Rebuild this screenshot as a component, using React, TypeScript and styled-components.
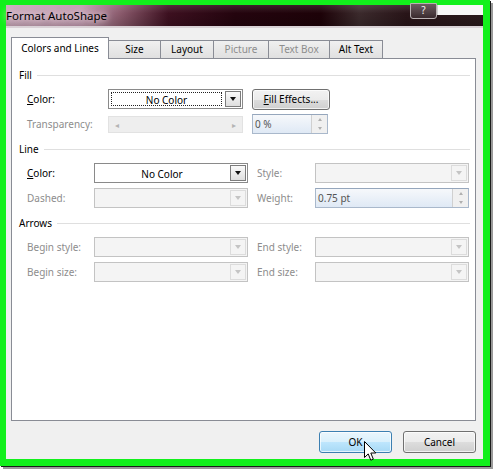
import React from "react";
import styled, { createGlobalStyle, css } from "styled-components";

const GlobalStyle = createGlobalStyle`
  html, body { margin: 0; padding: 0; background: #ffffff; }
  body { font-family: "Noto Sans", "Open Sans", sans-serif; font-size: 10px; color: #000; }
  * { box-sizing: border-box; }
`;

const Screen = styled.div`
  position: relative;
  width: 494px;
  height: 470px;
  background: #ffffff;
  overflow: hidden;
`;

const Frame = styled.div`
  width: 490px;
  height: 466px;
  border-style: solid;
  border-color: #12f01c;
  border-width: 5px 7px 7px 6px;
  box-shadow: 1px 1px 0 #1b1b1b, 3px 3px 0 #9a9a9a;
  display: flex;
  flex-direction: column;
  background: #f0f0f0;
`;

const TitleBar = styled.div`
  position: relative;
  height: 23px;
  flex: none;
  display: flex;
  align-items: center;
  background:
    linear-gradient(to bottom, rgba(255,255,255,0.12), rgba(0,0,0,0) 40%, rgba(0,0,0,0.15)),
    linear-gradient(to right, #c7a6b6 0%, #bd97aa 16%, #8a5a6c 24%, #3d1020 34%, #24040e 48%, #1d0208 66%, #3b2a2c 74%, #281418 84%, #2a1a1c 100%);
  border-bottom: 2px solid #d9d2d6;
`;

const TitleText = styled.span`
  font-size: 11.5px;
  color: #000;
  text-shadow: 0 0 6px rgba(255, 235, 245, 0.9), 0 0 10px rgba(255, 235, 245, 0.7);
`;

const HelpButton = styled.div`
  position: absolute;
  left: 404px;
  top: -2px;
  width: 27px;
  height: 16px;
  border: 1px solid #b9b0b2;
  border-radius: 0 0 3px 3px;
  background: linear-gradient(#6e5e62, #3a2a2e);
  color: #f4f4f4;
  font-size: 10px;
  line-height: 12px;
  text-align: center;
`;

const ClosePatch = styled.div`
  position: absolute;
  left: 431px;
  top: 0;
  width: 46px;
  height: 10px;
  background: #f7f7f7;
  border-left: 1px solid #cfcfcf;
`;

const Body = styled.div`
  flex: 1;
  display: flex;
  flex-direction: column;
  padding: 9px 7px 6px 5px;
  background: #f0f0f0;
`;

const TabStrip = styled.div`
  position: relative;
  z-index: 1;
  display: flex;
  align-items: flex-end;
  height: 22px;
  margin-bottom: -1px;
`;

const Tab = styled.div<{ $active?: boolean; $disabled?: boolean; $width: number }>`
  width: ${(p) => p.$width}px;
  text-align: center;
  border: 1px solid #898c95;
  border-bottom: none;
  margin-right: -1px;
  white-space: nowrap;
  color: ${(p) => (p.$disabled ? "#8d8d8d" : "#000")};
  ${(p) =>
    p.$active
      ? css`
          height: 22px;
          line-height: 20px;
          background: #ffffff;
          position: relative;
          z-index: 2;
        `
      : css`
          height: 18px;
          line-height: 17px;
          margin-bottom: 1px;
          background: linear-gradient(#f0f0f0, #e0e0e0);
        `}
`;

const Panel = styled.div`
  flex: 1;
  background: #ffffff;
  border: 1px solid #898c95;
  padding: 9px 5px 0 7px;
  display: flex;
  flex-direction: column;
  gap: 8px;
`;

const Section = styled.div`
  display: flex;
  flex-direction: column;
  gap: 7px;
`;

const SectionHeader = styled.div`
  display: flex;
  align-items: center;
  gap: 5px;
  height: 14px;
  line-height: 14px;
  &::after {
    content: "";
    flex: 1;
    height: 1px;
    background: #dfdfdf;
    margin-top: 1px;
  }
`;

const FieldGrid = styled.div<{ $cols: string }>`
  display: grid;
  grid-template-columns: ${(p) => p.$cols};
  grid-auto-rows: 20px;
  column-gap: 9px;
  row-gap: 5px;
  padding-left: 8px;
  align-items: center;
`;

const Label = styled.span<{ $disabled?: boolean }>`
  white-space: nowrap;
  color: ${(p) => (p.$disabled ? "#8d8d8d" : "#000")};
  u { text-decoration: underline; }
`;

const ComboBox = styled.div<{ $disabled?: boolean }>`
  height: 20px;
  display: flex;
  border: 1px solid ${(p) => (p.$disabled ? "#c3c3c3" : "#8a8a8a")};
  background: ${(p) => (p.$disabled ? "#f4f4f4" : "#ffffff")};
`;

const ComboText = styled.div<{ $focus?: boolean }>`
  flex: 1;
  margin: 2px;
  text-align: center;
  line-height: 14px;
  border: 1px dotted ${(p) => (p.$focus ? "#222" : "transparent")};
`;

const DropButton = styled.div<{ $disabled?: boolean }>`
  width: 16px;
  margin: 1px;
  display: flex;
  align-items: center;
  justify-content: center;
  border: 1px solid ${(p) => (p.$disabled ? "#dcdcdc" : "#7c7c7c")};
  background: ${(p) =>
    p.$disabled ? "#f4f4f4" : "linear-gradient(#fafafa, #dedede)"};
  &::before {
    content: "";
    border-left: 3.5px solid transparent;
    border-right: 3.5px solid transparent;
    border-top: 4px solid ${(p) => (p.$disabled ? "#c4c4c4" : "#111")};
  }
`;

const PushButton = styled.div<{ $hover?: boolean; $width: number; $tall?: boolean }>`
  width: ${(p) => p.$width}px;
  height: ${(p) => (p.$tall ? 22 : 21)}px;
  border-radius: 3px;
  display: flex;
  align-items: center;
  justify-content: center;
  border: 1px solid ${(p) => (p.$hover ? "#3c7fb1" : "#707070")};
  background: ${(p) =>
    p.$hover
      ? "linear-gradient(#eaf6fd 0%, #d9f0fc 50%, #bee6fd 51%, #a7d9f5 100%)"
      : "linear-gradient(#f2f2f2 0%, #ebebeb 50%, #dddddd 51%, #cfcfcf 100%)"};
  box-shadow: inset 0 0 0 1px rgba(255, 255, 255, 0.7);
  u { text-decoration: underline; }
`;

const SliderTrack = styled.div`
  height: 17px;
  display: flex;
  align-items: center;
  justify-content: space-between;
  padding: 0 6px;
  background: #eeeeee;
  border: 1px solid #e2e2e2;
  color: #b4b4b4;
  font-size: 8px;
`;

const SpinBox = styled.div<{ $width: number }>`
  width: ${(p) => p.$width}px;
  height: 20px;
  display: flex;
  border: 1px solid #a9b8cb;
  border-top-color: #95a6bc;
  background: linear-gradient(#f6f8fb, #dfe9f5);
`;

const SpinText = styled.div`
  flex: 1;
  padding-left: 2px;
  line-height: 18px;
  color: #555;
`;

const SpinButtons = styled.div`
  width: 16px;
  display: flex;
  flex-direction: column;
  border-left: 1px solid #d0d0d0;
  background: #f0f0f0;
`;

const SpinArrow = styled.div<{ $up?: boolean }>`
  flex: 1;
  display: flex;
  align-items: center;
  justify-content: center;
  &::before {
    content: "";
    border-left: 2.5px solid transparent;
    border-right: 2.5px solid transparent;
    ${(p) =>
      p.$up
        ? "border-bottom: 3px solid #b0b0b0;"
        : "border-top: 3px solid #b0b0b0;"}
  }
`;

const Footer = styled.div`
  flex: none;
  display: flex;
  justify-content: flex-end;
  gap: 11px;
  margin-top: 10px;
`;

const Cursor = styled.svg`
  position: absolute;
  left: 364px;
  top: 441px;
`;

const Combo: React.FC<{ text?: string; disabled?: boolean; focus?: boolean }> = ({
  text,
  disabled,
  focus,
}) => (
  <ComboBox $disabled={disabled}>
    <ComboText $focus={focus}>{text}</ComboText>
    <DropButton $disabled={disabled} />
  </ComboBox>
);

const Spin: React.FC<{ text: string; width: number }> = ({ text, width }) => (
  <SpinBox $width={width}>
    <SpinText>{text}</SpinText>
    <SpinButtons>
      <SpinArrow $up />
      <SpinArrow />
    </SpinButtons>
  </SpinBox>
);

const tabs = [
  { label: "Colors and Lines", active: true, width: 98 },
  { label: "Size", width: 53 },
  { label: "Layout", width: 54 },
  { label: "Picture", disabled: true, width: 56 },
  { label: "Text Box", disabled: true, width: 62 },
  { label: "Alt Text", width: 54 },
];

export default function App() {
  return (
    <Screen>
      <GlobalStyle />
      <Frame>
        <TitleBar>
          <TitleText>Format AutoShape</TitleText>
          <HelpButton>?</HelpButton>
          <ClosePatch />
        </TitleBar>
        <Body>
          <TabStrip>
            {tabs.map((t) => (
              <Tab key={t.label} $active={t.active} $disabled={t.disabled} $width={t.width}>
                {t.label}
              </Tab>
            ))}
          </TabStrip>
          <Panel>
            <Section>
              <SectionHeader>Fill</SectionHeader>
              <FieldGrid $cols="72px 135px 78px">
                <Label>
                  <u>C</u>olor:
                </Label>
                <Combo text="No Color" focus />
                <PushButton $width={78}>
                  <span>
                    <u>F</u>ill Effects...
                  </span>
                </PushButton>
                <Label $disabled>Transparency:</Label>
                <SliderTrack>
                  <span>◂</span>
                  <span>▸</span>
                </SliderTrack>
                <Spin text="0 %" width={76} />
              </FieldGrid>
            </Section>
            <Section>
              <SectionHeader>Line</SectionHeader>
              <FieldGrid $cols="58px 154px 49px 154px">
                <Label>
                  <u>C</u>olor:
                </Label>
                <Combo text="No Color" />
                <Label $disabled>Style:</Label>
                <Combo disabled />
                <Label $disabled>Dashed:</Label>
                <Combo disabled />
                <Label $disabled>Weight:</Label>
                <Spin text="0.75 pt" width={154} />
              </FieldGrid>
            </Section>
            <Section>
              <SectionHeader>Arrows</SectionHeader>
              <FieldGrid $cols="58px 154px 49px 154px">
                <Label $disabled>Begin style:</Label>
                <Combo disabled />
                <Label $disabled>End style:</Label>
                <Combo disabled />
                <Label $disabled>Begin size:</Label>
                <Combo disabled />
                <Label $disabled>End size:</Label>
                <Combo disabled />
              </FieldGrid>
            </Section>
          </Panel>
          <Footer>
            <PushButton $width={73} $hover $tall>
              OK
            </PushButton>
            <PushButton $width={73} $tall>
              Cancel
            </PushButton>
          </Footer>
        </Body>
      </Frame>
      <Cursor width="13" height="21" viewBox="0 0 13 21">
        <path
          d="M0.5 0.5 L0.5 16.5 L4.2 12.9 L6.8 19.2 L9.3 18.1 L6.8 12 L11.8 12 Z"
          fill="#ffffff"
          stroke="#000000"
          strokeWidth="1"
          strokeLinejoin="miter"
        />
      </Cursor>
    </Screen>
  );
}
